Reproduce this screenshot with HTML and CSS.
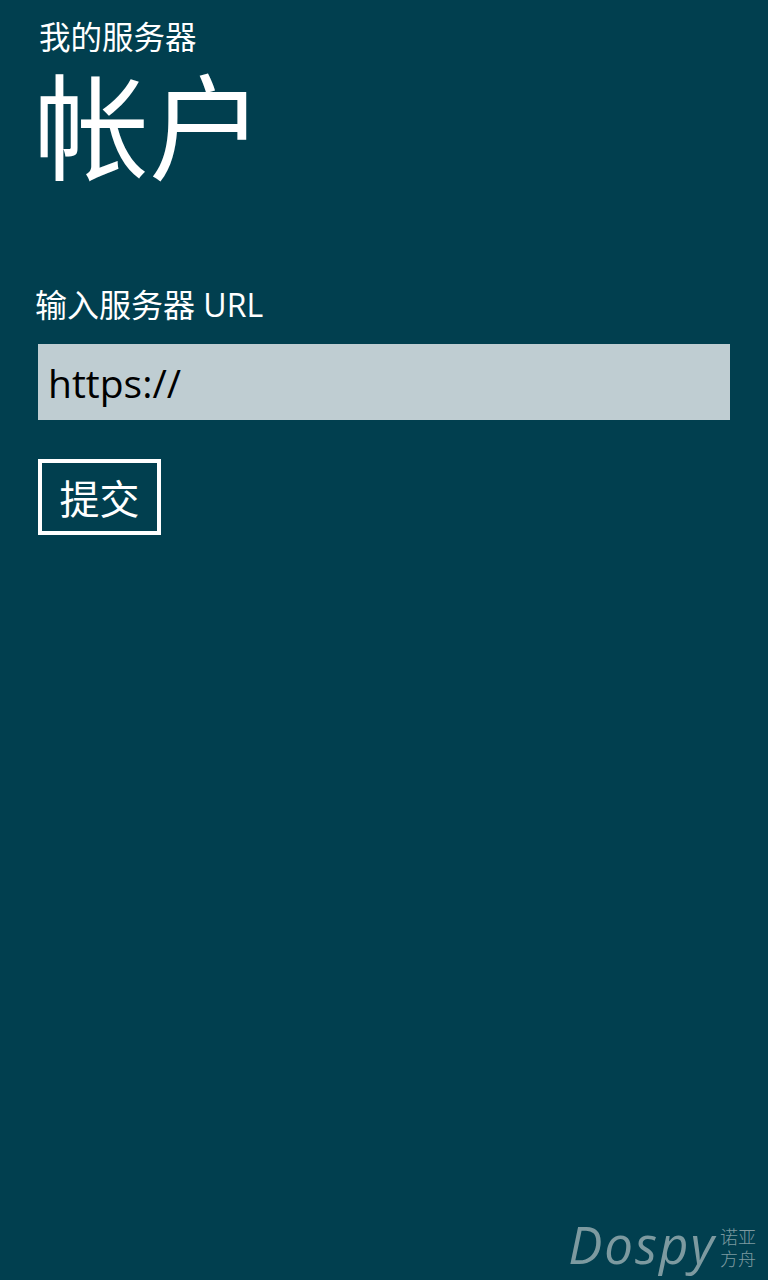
FILE: index.html
```html
<!DOCTYPE html>
<html lang="zh-CN">
<head>
<meta charset="utf-8">
<title>帐户</title>
<link rel="stylesheet" href="styles.css">
</head>
<body>
<div class="page">
  <header class="header">
    <div class="app-title">我的服务器</div>
    <h1 class="page-title">帐户</h1>
  </header>
  <main class="form">
    <label class="label" for="url">输入服务器 URL</label>
    <div class="input-box"><span class="input-text">https://</span></div>
    <div class="actions"><button class="submit">提交</button></div>
  </main>
  <footer class="watermark">
    <span class="wm-logo">Dospy</span>
    <span class="wm-cn"><span>诺亚</span><span>方舟</span></span>
  </footer>
</div>
</body>
</html>
```
FILE: styles.css
```css
html, body {
  margin: 0;
  padding: 0;
  background: #013f4f;
}
body {
  font-family: "Open Sans", "Noto Sans CJK SC", sans-serif;
  color: #ffffff;
}
.page {
  width: 768px;
  height: 1280px;
  display: flex;
  flex-direction: column;
  box-sizing: border-box;
  padding: 0 38px;
}
.header {
  padding-top: 18px;
  font-family: "Liberation Sans", "Noto Sans CJK SC", sans-serif;
}
.app-title {
  font-size: 31.5px;
  line-height: 40px;
  padding-left: 1px;
}
.page-title {
  margin: 0;
  padding-top: 5px;
  font-weight: normal;
  font-size: 115px;
  line-height: 136px;
  margin-left: -4px;
}
.form {
  display: flex;
  flex-direction: column;
  padding-top: 86px;
}
.label {
  font-size: 32px;
  line-height: 40px;
  margin-left: -3px;
}
.input-box {
  margin-top: 19px;
  height: 76px;
  background: #bfcdd2;
  display: flex;
  align-items: center;
  padding-left: 10px;
}
.input-text {
  color: #000000;
  font-size: 39px;
}
.actions {
  margin-top: 39px;
  display: flex;
}
.submit {
  background: transparent;
  border: 4px solid #ffffff;
  color: #ffffff;
  font-family: "Noto Sans CJK SC", sans-serif;
  font-size: 40px;
  width: 123px;
  height: 76px;
  padding: 0;
  line-height: 1;
}
.watermark {
  margin-top: auto;
  align-self: flex-end;
  margin-right: -26px;
  margin-bottom: 8px;
  display: flex;
  align-items: center;
  gap: 4px;
  color: #7d9aa0;
}
.wm-logo {
  font-family: "Open Sans", sans-serif;
  font-style: italic;
  font-size: 51px;
  line-height: 56px;
  letter-spacing: 2px;
}
.wm-cn {
  display: flex;
  flex-direction: column;
  padding-top: 10px;
  font-family: "Liberation Sans", "Noto Sans CJK SC", sans-serif;
  font-size: 18px;
  line-height: 22px;
  font-weight: 300;
}
```
